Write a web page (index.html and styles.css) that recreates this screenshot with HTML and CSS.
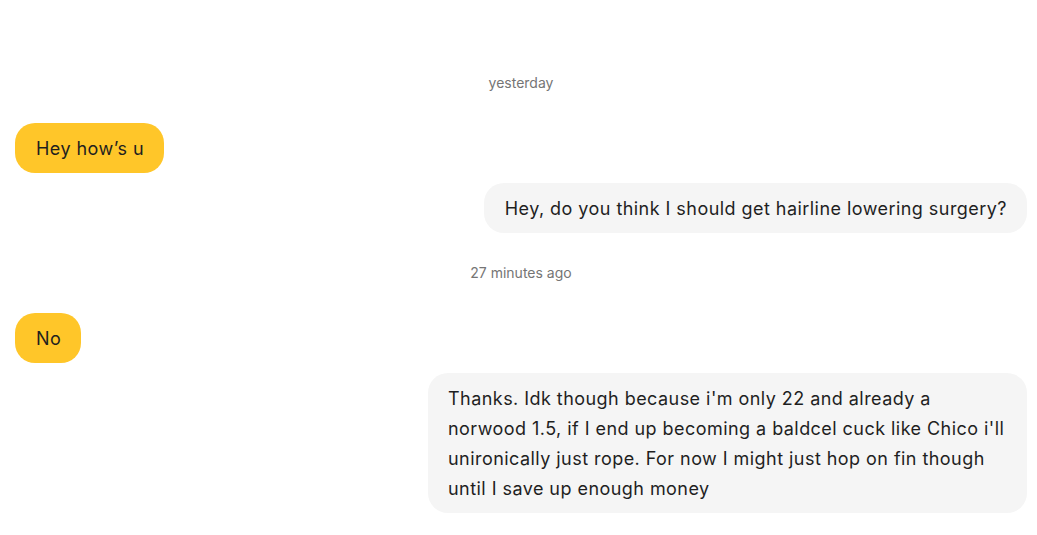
FILE: index.html
```html
<!DOCTYPE html>
<html>
<head>
<meta charset="utf-8">
<link rel="stylesheet" href="styles.css">
</head>
<body>
<div class="chat">
  <div class="stamp">yesterday</div>
  <div class="msg in"><div class="bubble">Hey how’s u</div></div>
  <div class="msg out"><div class="bubble">Hey, do you think I should get hairline lowering surgery?</div></div>
  <div class="stamp">27 minutes ago</div>
  <div class="msg in"><div class="bubble">No</div></div>
  <div class="msg out"><div class="bubble wide">Thanks. Idk though because i'm only 22 and already a<br>norwood 1.5, if I end up becoming a baldcel cuck like Chico i'll<br>unironically just rope. For now I might just hop on fin though<br>until I save up enough money</div></div>
</div>
</body>
</html>
```
FILE: styles.css
```css
html, body { margin: 0; padding: 0; background: #fff; }
body { font-family: Inter, "Noto Sans", sans-serif; color: #1f1f1f; }
.chat { display: flex; flex-direction: column; padding: 43px 10px 0 15px; }
.stamp { text-align: center; font-size: 14px; line-height: 20px; color: #757575; margin: 30px 0; }
.msg { display: flex; }
.msg + .msg { margin-top: 10px; }
.msg.in { justify-content: flex-start; }
.msg.out { justify-content: flex-end; }
.bubble { font-size: 18px; letter-spacing: 0.45px; line-height: 30px; padding: 11px 20px 9px 21px; border-radius: 20px; white-space: nowrap; }
.bubble.wide { width: 559px; padding-left: 20px; }
.in .bubble { background: #ffc629; }
.out .bubble { background: #f5f5f5; }
```
